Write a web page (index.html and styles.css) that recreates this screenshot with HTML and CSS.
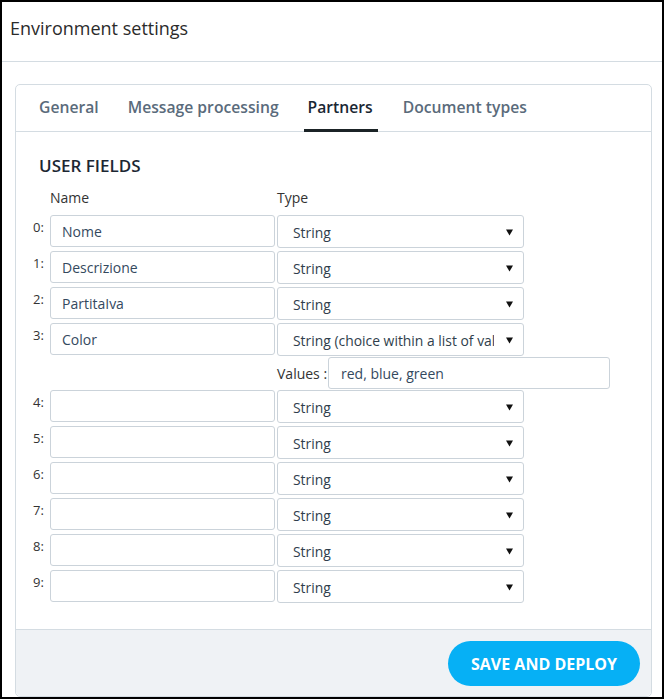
FILE: index.html
```html
<!DOCTYPE html>
<html lang="en">
<head>
<meta charset="utf-8">
<title>Environment settings</title>
<link rel="stylesheet" href="styles.css">
</head>
<body>
<div class="frame">
  <header class="page-header">Environment settings</header>
  <section class="card">
    <nav class="tabs">
      <a class="tab">General</a>
      <a class="tab">Message processing</a>
      <a class="tab active">Partners</a>
      <a class="tab">Document types</a>
    </nav>
    <div class="card-body">
      <h2 class="section-title">USER FIELDS</h2>
      <div class="fields">
        <div class="head-row">
          <span class="col-name">Name</span>
          <span class="col-type">Type</span>
        </div>

        <div class="field-row">
          <span class="idx">0:</span>
          <input class="text-input" type="text" value="Nome">
          <div class="select"><span class="select-value">String</span><svg class="caret" viewBox="0 0 8 8"><path d="M0 1h8L4 8z"/></svg></div>
        </div>
        <div class="field-row">
          <span class="idx">1:</span>
          <input class="text-input" type="text" value="Descrizione">
          <div class="select"><span class="select-value">String</span><svg class="caret" viewBox="0 0 8 8"><path d="M0 1h8L4 8z"/></svg></div>
        </div>
        <div class="field-row">
          <span class="idx">2:</span>
          <input class="text-input" type="text" value="PartitaIva">
          <div class="select"><span class="select-value">String</span><svg class="caret" viewBox="0 0 8 8"><path d="M0 1h8L4 8z"/></svg></div>
        </div>
        <div class="field-row">
          <span class="idx">3:</span>
          <input class="text-input" type="text" value="Color">
          <div class="select"><span class="select-value">String (choice within a list of values)</span><svg class="caret" viewBox="0 0 8 8"><path d="M0 1h8L4 8z"/></svg></div>
        </div>
        <div class="values-row">
          <span class="values-label">Values :</span>
          <input class="text-input values-input" type="text" value="red, blue, green">
        </div>
        <div class="field-row">
          <span class="idx">4:</span>
          <input class="text-input" type="text" value="">
          <div class="select"><span class="select-value">String</span><svg class="caret" viewBox="0 0 8 8"><path d="M0 1h8L4 8z"/></svg></div>
        </div>
        <div class="field-row">
          <span class="idx">5:</span>
          <input class="text-input" type="text" value="">
          <div class="select"><span class="select-value">String</span><svg class="caret" viewBox="0 0 8 8"><path d="M0 1h8L4 8z"/></svg></div>
        </div>
        <div class="field-row">
          <span class="idx">6:</span>
          <input class="text-input" type="text" value="">
          <div class="select"><span class="select-value">String</span><svg class="caret" viewBox="0 0 8 8"><path d="M0 1h8L4 8z"/></svg></div>
        </div>
        <div class="field-row">
          <span class="idx">7:</span>
          <input class="text-input" type="text" value="">
          <div class="select"><span class="select-value">String</span><svg class="caret" viewBox="0 0 8 8"><path d="M0 1h8L4 8z"/></svg></div>
        </div>
        <div class="field-row">
          <span class="idx">8:</span>
          <input class="text-input" type="text" value="">
          <div class="select"><span class="select-value">String</span><svg class="caret" viewBox="0 0 8 8"><path d="M0 1h8L4 8z"/></svg></div>
        </div>
        <div class="field-row">
          <span class="idx">9:</span>
          <input class="text-input" type="text" value="">
          <div class="select"><span class="select-value">String</span><svg class="caret" viewBox="0 0 8 8"><path d="M0 1h8L4 8z"/></svg></div>
        </div>
      </div>
    </div>
    <footer class="card-footer">
      <button class="btn-primary" type="button">SAVE AND DEPLOY</button>
    </footer>
  </section>
</div>
</body>
</html>
```

FILE: styles.css
```css
* {
  box-sizing: border-box;
}

html, body {
  margin: 0;
  padding: 0;
  background: #fff;
}

body {
  font-family: "Open Sans", "Liberation Sans", sans-serif;
  color: #333;
}

.frame {
  width: 664px;
  height: 699px;
  border: 2px solid #000;
  overflow: hidden;
  display: flex;
  flex-direction: column;
}

.page-header {
  height: 60px;
  flex: none;
  padding: 0 0 8px 8px;
  display: flex;
  align-items: center;
  font-size: 18px;
  color: #2b2b2b;
  border-bottom: 1px solid #d4dce2;
}

.card {
  margin: 22px 10px 0 13px;
  border: 1px solid #d4dce2;
  border-radius: 5px;
  display: flex;
  flex-direction: column;
  flex: 1;
  min-height: 0;
}

/* tab strip */
.tabs {
  height: 47px;
  flex: none;
  display: flex;
  align-items: stretch;
  padding-left: 19px;
  gap: 21px;
  border-bottom: 1px solid #d4dce2;
}

.tab {
  position: relative;
  padding: 11px 4px 0;
  font-size: 15.7px;
  font-weight: 600;
  color: #5a6b7b;
  cursor: pointer;
}

.tab.active {
  color: #1a2733;
  padding-right: 5px;
}

.tab.active::after {
  content: "";
  position: absolute;
  left: 0;
  right: 0;
  bottom: -1px;
  height: 3px;
  background: #1b2326;
}

.card-body {
  flex: 1;
  padding: 22px 0 0 23px;
}

.section-title {
  margin: 0;
  font-size: 17px;
  font-weight: 600;
  color: #1c2733;
  line-height: 24px;
}

.fields {
  margin-left: -6px;
  margin-top: 10px;
}

.head-row {
  display: grid;
  grid-template-columns: 17px 227px auto;
  font-size: 14px;
  line-height: 20px;
  color: #333;
  margin-bottom: 7px;
}

.col-name {
  grid-column: 2;
}

.field-row {
  display: grid;
  grid-template-columns: 15px 225px 247px;
  column-gap: 2px;
  align-items: start;
  margin-bottom: 3px;
}

.idx {
  font-size: 13px;
  line-height: 18px;
  padding-top: 3px;
  color: #333;
}

.text-input {
  height: 32px;
  width: 100%;
  border: 1px solid #cbd3da;
  border-radius: 3px;
  padding: 0 11px;
  font-family: inherit;
  font-size: 14px;
  color: #34495e;
  background: #fff;
  outline: none;
}

/* closed dropdown */
.select {
  position: relative;
  height: 33px;
  border: 1px solid #cbd3da;
  border-radius: 3px;
  padding: 1px 0 0 15px;
  display: flex;
  align-items: center;
  font-size: 13.9px;
  color: #2f3e4c;
  background: #fff;
}

.select-value {
  display: block;
  width: 201px;
  overflow: hidden;
  white-space: nowrap;
}

.caret {
  position: absolute;
  right: 10px;
  top: 12px;
  width: 7px;
  height: 8px;
  fill: #111;
}

.values-row {
  display: flex;
  align-items: center;
  margin: -2px 0 1px 244px;
}

.values-label {
  font-size: 14px;
  color: #333;
  width: 51px;
  flex: none;
}

.values-input {
  width: 282px;
  padding-left: 12px;
}

.card-footer {
  flex: none;
  height: 67px;
  background: #eff2f5;
  border-top: 1px solid #d4dce2;
  border-radius: 0 0 5px 5px;
  display: flex;
  justify-content: flex-end;
  align-items: flex-start;
  padding: 11px 11px 0 0;
}

.btn-primary {
  width: 192px;
  height: 45px;
  border: none;
  border-radius: 23px;
  background: #06b0f5;
  color: #fff;
  font-family: inherit;
  font-size: 16px;
  font-weight: 700;
  cursor: pointer;
}
```
